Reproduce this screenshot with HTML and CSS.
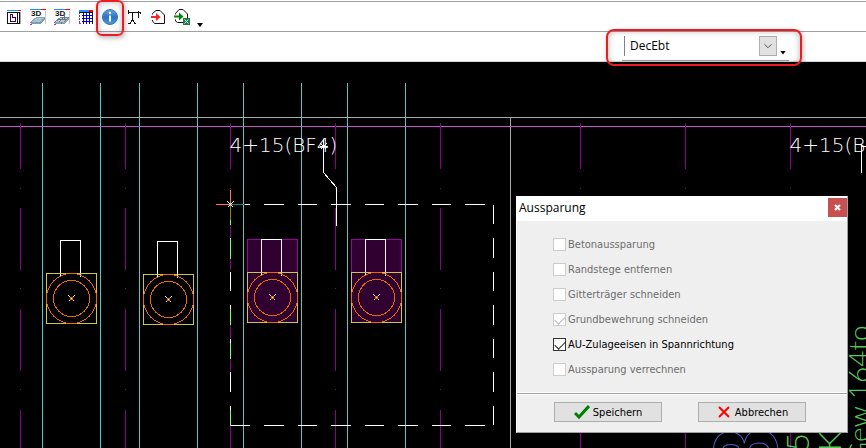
FILE: index.html
```html
<!DOCTYPE html>
<html lang="de">
<head>
  <meta charset="UTF-8">
  <title>Aussparung</title>
  <link rel="stylesheet" href="styles.css">
</head>
<body>

  <div class="toolbar">
    <button class="tool" aria-label="Ansicht">
      <svg viewBox="0 0 16 16">
        <path d="M1 1.5h11" stroke="#1e90ff"/>
        <path d="M12 1.5h3" stroke="#f00"/>
        <path d="M1.500 3v11.500h12V3M1 3.500h13M11.500 3v11" stroke="#111"/>
        <path d="M14.500 3v12" stroke="#aaa"/>
        <path d="M4.500 12.500V5.500h2v3h3v4z" stroke="#404"/>
      </svg>
    </button>
    <button class="tool" aria-label="3D Platte">
      <svg viewBox="0 0 16 16">
        <path d="M0 .5h11" stroke="#1e90ff"/>
        <path d="M11 .5h5" stroke="#f00"/>
        <path d="M15.500 2v13" stroke="#ccc"/>
        <text x="1" y="7" class="tiny">3D</text>
        <path d="M1 13l6-5h8l-5 5z" fill="#a9c4d8" stroke="#8aa"/>
        <path d="M1 13v2h9l5-5V8l-5 5z" fill="#7f9db0" stroke="none"/>
        <path d="M0 15.500h2" stroke="#f0f"/>
      </svg>
    </button>
    <button class="tool" aria-label="3D Bewehrung">
      <svg viewBox="0 0 16 16">
        <path d="M0 .5h11" stroke="#1e90ff"/>
        <path d="M11 .5h5" stroke="#f00"/>
        <path d="M15.500 2v13" stroke="#ccc"/>
        <text x="1" y="7" class="tiny">3D</text>
        <path d="M1 13l6-5h8l-5 5z" fill="#b8ccd8" stroke="#789"/>
        <path d="M1 13v2h9l5-5V8l-5 5z" fill="#8ca6b8" stroke="none"/>
        <path d="M5 13l5-5M4 10.500h8M7 13v2M10 6v4" stroke="#678"/>
        <path d="M0 15.500h2" stroke="#f0f"/>
      </svg>
    </button>
    <button class="tool" aria-label="Raster">
      <svg viewBox="0 0 16 16">
        <path d="M1 1.500h10" stroke="#1e90ff" stroke-width="2"/>
        <path d="M11 1.500h4" stroke="#f00" stroke-width="2"/>
        <path d="M1.500 3v12" stroke="#555" stroke-dasharray="2 1"/>
        <path d="M1 3.500h13M14.500 3v12" stroke="#111"/>
        <path d="M4 6.500h10M4 9.500h10M4 12.500h10M5.500 4v11M8.500 4v11M11.500 4v11" stroke="#00c"/>
        <path d="M1 14.500h2" stroke="#f0f"/>
      </svg>
    </button>
    <button class="tool marked" aria-label="Info">
      <svg viewBox="0 0 16 16" class="smooth">
        <defs>
          <linearGradient id="ball" x2="0" y2="1">
            <stop offset="0" stop-color="#6aa8e0"/>
            <stop offset=".5" stop-color="#2a74c4"/>
            <stop offset="1" stop-color="#4a9ae0"/>
          </linearGradient>
        </defs>
        <circle cx="8" cy="8" r="7.500" fill="url(#ball)" stroke="#3a78b8"/>
        <circle cx="8" cy="4" r="1.200" fill="#fff"/>
        <path d="M8 6.500v6" stroke="#fff" stroke-width="2"/>
      </svg>
    </button>
    <button class="tool" aria-label="Messen">
      <svg viewBox="0 0 16 16">
        <path d="M2 3.500h13M2.500 1v4M6.500 3v9M12.500 2v7M4 14l2.500-3L9 14M2 14.500h3M8 14.500h2M14.500 3v2" stroke="#111"/>
      </svg>
    </button>
    <button class="tool" aria-label="Import">
      <svg viewBox="0 0 16 16" class="smooth">
        <path d="M2.500 5.500V4.500L6 1.500h4L14.500 6v8.500H4.500L2.500 12v-1" stroke="#111"/>
        <path d="M1 8h6" stroke="#f22" stroke-width="2"/>
        <path d="M6 4L10.500 8 6 12z" fill="#f22" stroke="none"/>
      </svg>
    </button>
    <button class="tool" aria-label="Excel Import">
      <svg viewBox="0 0 16 16" class="smooth">
        <path d="M1.500 5.500V4.500L5 .5h4L13.500 5v4M1.500 10.500V12l2 1.500H9" stroke="#111"/>
        <path d="M0 7.500h6" stroke="#080" stroke-width="2"/>
        <path d="M5 3.500l4.500 4-4.500 4z" fill="#080" stroke="none"/>
        <path d="M9 9h7v7H9z" fill="#1d7a46" stroke="none"/>
        <path d="M10.500 10.500l4 4M14.500 10.500l-4 4" stroke="#fff"/>
      </svg>
    </button>
    <button class="more" aria-label="Mehr"></button>
  </div>

  <div class="toolbar second">
    <div class="combo marked">
      <select class="combo-list" aria-label="Element">
        <option>DecEbt</option>
      </select>
      <svg class="combo-arrow" viewBox="0 0 18 20"><path d="M5 8l4 4 4-4"/></svg>
      <button class="more" aria-label="Mehr"></button>
    </div>
  </div>

  <main class="plan">
    <svg class="drawing">
      <defs>
        <g id="pile">
          <path class="white" d="M14 3V-33h20V3"/>
          <rect class="yellow" width="50" height="50"/>
          <circle class="orange" cx="25" cy="25" r="25"/>
          <circle class="orange" cx="25" cy="25" r="18"/>
          <path class="white" d="M22 22l6 6M28 22l-6 6"/>
          <rect class="orange" x="24" y="24" width="2" height="2"/>
        </g>
      </defs>
      <g transform="translate(.5 .5)">
        <!-- recesses -->
        <rect class="recess" x="247" y="177" width="50" height="83"/>
        <rect class="recess" x="351" y="177" width="50" height="83"/>

        <!-- axes -->
        <path class="gray" d="M-1 55H4000M510 55V4000"/>
        <path class="magenta" d="M-1 64H4000"/>
        <path class="cyan" d="M42 20V4000M100 20V4000M139 20V4000M197 20V4000M243 20V4000M301 20V4000M347 20V4000M405 20V4000"/>
        <path class="purple" d="M20 60V4000M125 60V4000M230 60V4000M335 60V4000M440 60V4000M580 60V4000M685 60V4000M790 60V4000"/>

        <!-- slab edge -->
        <path class="white dash" d="M230 142H493M493 142V363M230 363H493"/>
        <path class="white dash" d="M230 142V363"/>
        <path class="lime" d="M230 157v5M230 176v20M230 246v16M230 280v16M230 347v16"/>
        <path class="red" d="M215 142h15v-15"/>
        <path class="teal" d="M230 142h14"/>
        <path class="olive" d="M230 142v15"/>
        <path class="white" d="M227 139l6 6M233 139l-6 6"/>

        <use href="#pile" x="46" y="211"/>
        <use href="#pile" x="143" y="212"/>
        <use href="#pile" x="247" y="210"/>
        <use href="#pile" x="351" y="210"/>

        <!-- labels -->
        <path class="white" d="M323 76V110L336 125V163M319 84h8M320 81l6 6M326 81l-6 6"/>
        <path class="white" d="M861 110V84h5M861 81v6"/>
        <text class="label" x="229" y="89">4+15(BF4)</text>
        <text class="label" x="789" y="89">4+15(BF4)</text>
        <text class="outline" transform="translate(776 415) rotate(-90)">8</text>
        <text class="note large" transform="translate(808 389) rotate(-90)">5</text>
        <text class="note large" transform="translate(840 389) rotate(-90)">K</text>
        <text class="note" transform="translate(868 400) rotate(-90)">Gew 164to</text>
      </g>
    </svg>

    <form class="dialog">
      <div class="dialog-title">
        <span>Aussparung</span>
        <button type="button" class="close" aria-label="Schließen">
          <svg viewBox="0 0 19 19"><path d="M7 7l5 5M12 7l-5 5"/></svg>
        </button>
      </div>
      <div class="options">
        <label><input type="checkbox" disabled>Betonaussparung</label>
        <label><input type="checkbox" disabled>Randstege entfernen</label>
        <label><input type="checkbox" disabled>Gitterträger schneiden</label>
        <label><input type="checkbox" disabled checked>Grundbewehrung schneiden</label>
        <label><input type="checkbox" checked>AU-Zulageeisen in Spannrichtung</label>
        <label><input type="checkbox" disabled>Aussparung verrechnen</label>
      </div>
      <div class="actions">
        <button type="button">
          <svg viewBox="0 0 16 14"><path d="M1 8l4 4L15 1" stroke="#008000" stroke-width="3"/></svg>
          Speichern
        </button>
        <button type="button">
          <svg viewBox="0 0 16 14"><path d="M3 2l10 10M13 2L3 12" stroke="#f00" stroke-width="2"/></svg>
          Abbrechen
        </button>
      </div>
    </form>
  </main>

</body>
</html>
```
FILE: styles.css
```css
* {
  box-sizing: border-box;
}

body {
  margin: 0;
  height: 100vh;
  display: flex;
  flex-direction: column;
  overflow: hidden;
  background: #fff;
  color: #000;
  font-family: "Open Sans", "Noto Sans", sans-serif;
  font-size: 12px;
}

button {
  margin: 0;
  padding: 0;
  border: none;
  background: none;
  font: inherit;
  color: inherit;
}

svg {
  display: block;
  fill: none;
}

/* toolbars */
.toolbar {
  display: flex;
  align-items: center;
  height: 32px;
  padding: 2px 0 0 2px;
  border-bottom: 1px solid #a0a0a0;
  background: linear-gradient(#fff 1px, #a0a0a0 1px, #a0a0a0 2px, #fff 2px);
}

.toolbar.second {
  height: 30px;
  padding: 0 77px 0 0;
  border-bottom: 1px solid #d8d8d8;
  background: #fff;
  justify-content: flex-end;
}

.tool {
  position: relative;
  width: 24px;
  height: 24px;
  padding: 4px;
}

.tool svg {
  width: 16px;
  height: 16px;
  shape-rendering: crispEdges;
}

.tool svg.smooth {
  shape-rendering: auto;
}

.tiny {
  font: bold 8px "Liberation Sans", sans-serif;
  fill: #111;
}

.more {
  align-self: flex-end;
  width: 6px;
  height: 4px;
  margin: 0 0 4px 3px;
  background: #000;
  clip-path: polygon(0 0, 100% 0, 50% 100%);
}

/* red frame round a control */
.marked::after {
  content: "";
  position: absolute;
  z-index: 2;
  inset: -5px -2px -7px;
  border: 2px solid #ed1c24;
  border-radius: 6px;
  box-shadow: inset 0 0 6px rgba(0, 0, 0, 0.3), 1px 2px 5px rgba(0, 0, 0, 0.3);
  pointer-events: none;
}

.combo {
  position: relative;
  display: flex;
  align-items: center;
  width: 167px;
  height: 28px;
  padding: 0 0 1px 2px;
  border-bottom: 1px solid #a0a0a0;
}

.combo.marked::after {
  inset: -4px -13px -6px -16px;
  border-radius: 8px;
}

.combo-list {
  width: 152px;
  height: 20px;
  padding: 0 0 0 5px;
  border: none;
  border-left: 1px solid #808080;
  border-radius: 0;
  background: #fff;
  font: inherit;
  appearance: none;
}

.combo-arrow {
  width: 18px;
  height: 20px;
  margin-left: -17px;
  border: 1px solid #adadad;
  background: #e1e1e1;
  stroke: #444;
  pointer-events: none;
}

.combo .more {
  margin: 0 0 4px 3px;
}

/* drawing area */
.plan {
  position: relative;
  flex: 1;
  background: #000;
  overflow: hidden;
}

.drawing {
  width: 100%;
  height: 100%;
  shape-rendering: crispEdges;
}

.white { stroke: #fff; }
.gray { stroke: #a8a8a8; }
.magenta { stroke: #c850c8; }
.cyan { stroke: #58c4c4; }
.purple { stroke: #8b008b; stroke-dasharray: 46 19 1 19 62 18 1 20 62 18 1 20 62 18 1 20 62 18 1 20 62 18 1 20; }
.lime { stroke: #74ff74; }
.red { stroke: #ff7070; }
.teal { stroke: #008b8b; }
.olive { stroke: #8b8b00; }
.yellow { stroke: #c8c850; }
.orange { stroke: #e86a00; }
.recess { fill: #300030; stroke: #a000a0; }
.dash { stroke-dasharray: 19.5 14; }

.label {
  font: 200 20px "DejaVu Sans", "DejaVu Sans Light", sans-serif;
  fill: #fff;
}

.note {
  font: 300 28px Lato, sans-serif;
  fill: #58c858;
}

.note.large {
  font-size: 32px;
}

.outline {
  font: bold 90px "Liberation Sans", sans-serif;
  stroke: #5858c8;
}

/* dialog */
.dialog {
  position: absolute;
  left: 516px;
  top: 134px;
  width: 332px;
  border: 1px solid #a0a0a0;
  border-top-color: #fff;
  border-left-color: #fff;
  background: #efefef;
}

.dialog-title {
  display: flex;
  justify-content: space-between;
  height: 24px;
  padding-left: 2px;
  background: #fff;
  line-height: 22px;
}

.close {
  width: 19px;
  height: 19px;
  margin-top: 1px;
  background: #c75050;
}

.close svg {
  stroke: #fff;
  stroke-width: 2;
}

.options {
  display: flex;
  flex-direction: column;
  align-items: flex-start;
  padding: 11px 36px;
  font-family: "DejaVu Sans Condensed", "Open Sans", sans-serif;
  font-size: 11px;
}

.options label {
  display: flex;
  align-items: center;
  gap: 2px;
  height: 25px;
}

.options label:has(:disabled) {
  color: #6d6d6d;
}

.options input {
  appearance: none;
  width: 13px;
  height: 13px;
  margin: 0;
  border: 1px solid #333;
  background: #fff;
  color: #222;
}

.options input:disabled {
  border-color: #ccc;
  color: #bbb;
}

.options input:checked::before {
  content: "";
  display: block;
  width: 9px;
  height: 5px;
  margin: 2px 1px;
  border: solid currentColor;
  border-width: 0 0 1px 1px;
  transform: rotate(-45deg);
}

.actions {
  display: flex;
  gap: 36px;
  padding: 8px 37px 10px;
  border-top: 1px solid #a0a0a0;
  box-shadow: 0 -1px #fff, inset 0 1px #fff;
  font-family: "DejaVu Sans Condensed", "Open Sans", sans-serif;
  font-size: 11px;
}

.actions button {
  display: flex;
  justify-content: center;
  align-items: center;
  gap: 3px;
  width: 108px;
  height: 20px;
  border: 1px solid #adadad;
  background: #e1e1e1;
}

.actions svg {
  width: 16px;
  height: 14px;
}
```
